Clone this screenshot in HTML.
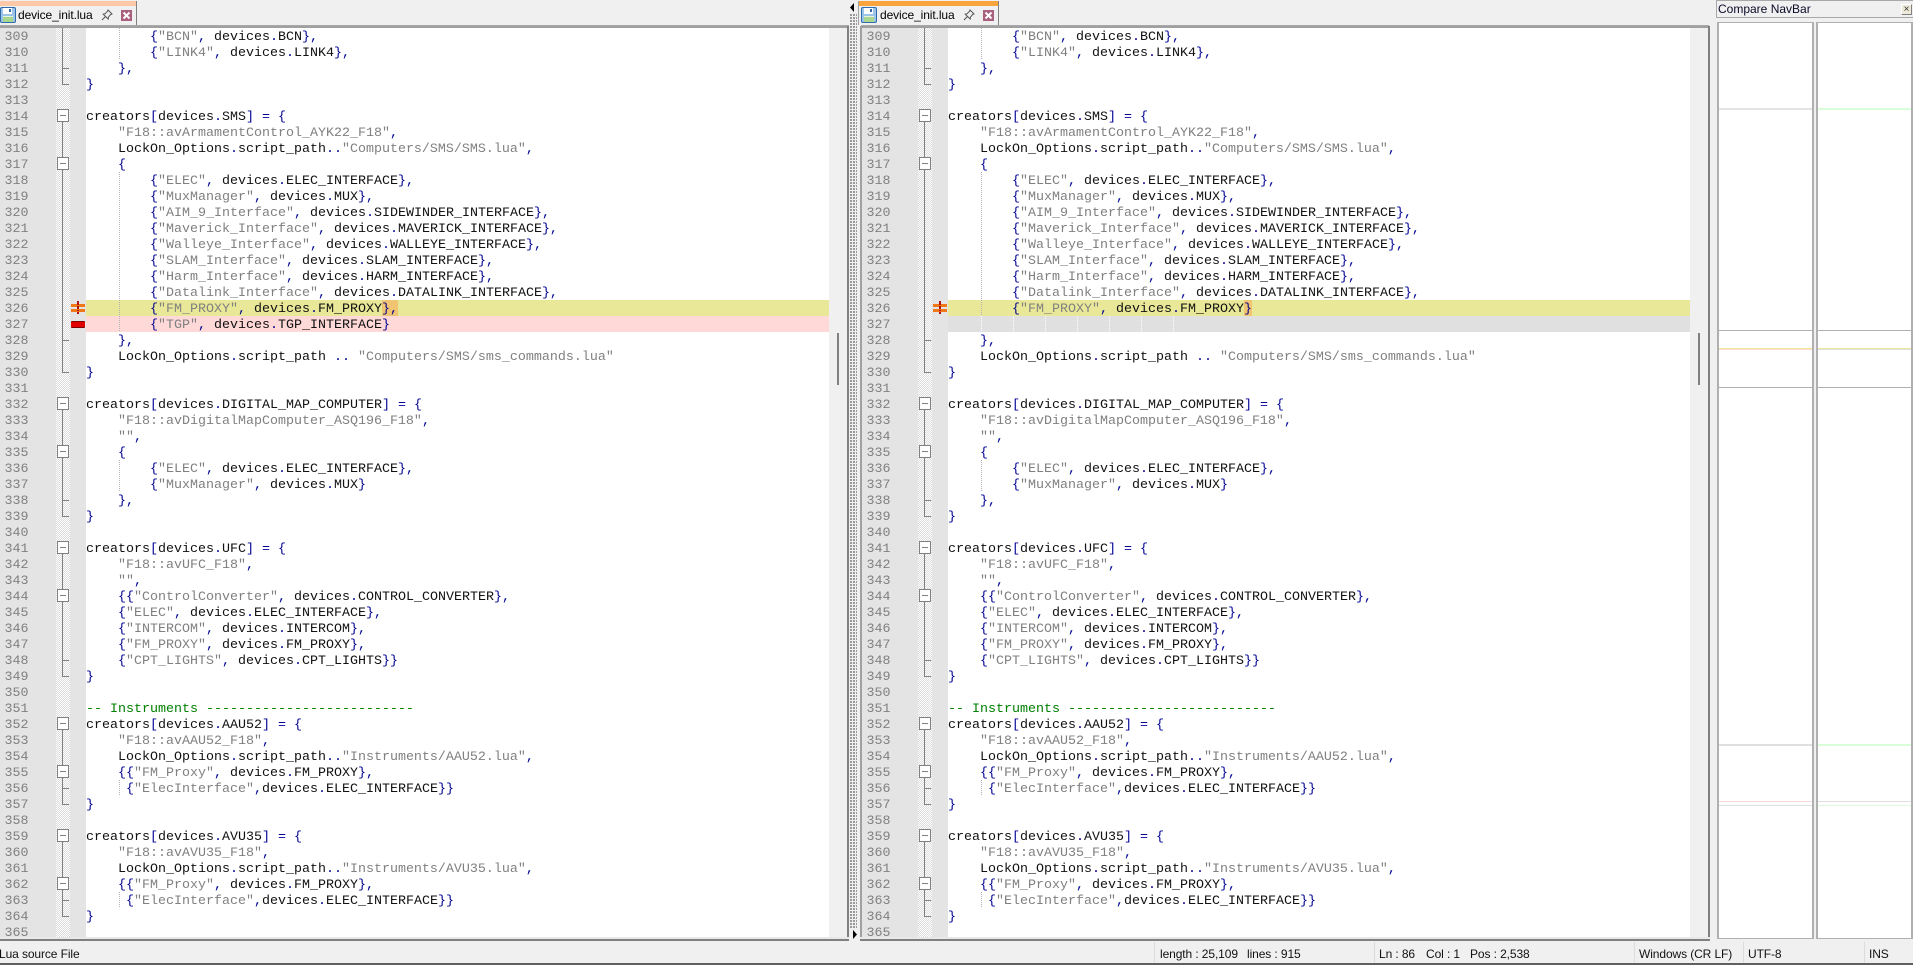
<!DOCTYPE html>
<html lang="en"><head><meta charset="utf-8"><title>device_init.lua</title>
<style>
html,body{margin:0;padding:0}
body{width:1913px;height:965px;background:#f0f0f0;position:relative;overflow:hidden;font-family:"Liberation Sans",sans-serif}
.a{position:absolute;display:block}
pre{margin:0;font:13.33px/16px "Liberation Mono",monospace;color:#111;white-space:pre;overflow:hidden}
pre b{color:#000090;font-weight:normal}
pre i{font-style:normal;color:#808080}
pre u{text-decoration:none;color:#008000}
.ln{color:#808080;top:30px;height:907px;width:48px}
.code{top:30px;height:907px;width:743px}
.tabt{font-size:12px;top:6px;line-height:19px;color:#000;letter-spacing:-.1px}
.st{font-size:12px;top:946px;line-height:16px;color:#111;white-space:pre;letter-spacing:-.1px}
.sep{top:942px;width:1px;height:21px;background:#dcdcdc}
.chk{background-color:#f4f4f4;background-image:repeating-conic-gradient(#dcdcdc 0 25%,#fff 0 50%);background-size:2px 2px}
</style></head>
<body>
<svg width="0" height="0" style="position:absolute">
<defs>
<symbol id="fold" viewBox="0 0 16 909" width="16" height="909">
<g fill="none" stroke="#808080" stroke-width="1" shape-rendering="crispEdges">
<path d="M6.5 0V56.5H13M6.5 40.5H13"/>
<path d="M6.5 81V344.5H13M6.5 312.5H13"/>
<path d="M6.5 369V488.5H13M6.5 472.5H13"/>
<path d="M6.5 513V648.5H13M6.5 632.5H13"/>
<path d="M6.5 689V776.5H13M6.5 760.5H13"/>
<path d="M6.5 801V888.5H13M6.5 872.5H13"/>
<g fill="#fff">
<rect x="1.5" y="81.5" width="11" height="12"/><rect x="1.5" y="129.5" width="11" height="12"/>
<rect x="1.5" y="369.5" width="11" height="12"/><rect x="1.5" y="417.5" width="11" height="12"/>
<rect x="1.5" y="513.5" width="11" height="12"/><rect x="1.5" y="561.5" width="11" height="12"/>
<rect x="1.5" y="689.5" width="11" height="12"/><rect x="1.5" y="737.5" width="11" height="12"/>
<rect x="1.5" y="801.5" width="11" height="12"/><rect x="1.5" y="849.5" width="11" height="12"/>
</g>
<path d="M4 87.5H10M4 135.5H10M4 375.5H10M4 423.5H10M4 519.5H10M4 567.5H10M4 695.5H10M4 743.5H10M4 807.5H10M4 855.5H10"/>
</g>
</symbol>
<symbol id="guides" viewBox="0 0 40 909" width="40" height="909">
<path d="M33.5 0V32M33.5 144V304M33.5 432V464M33.5 752V768M33.5 864V880" fill="none" stroke="#b4b4b4" stroke-width="1" stroke-dasharray="1 1" shape-rendering="crispEdges"/>
</symbol>
<symbol id="floppy" viewBox="0 0 16 16" width="16" height="16">
<rect x=".5" y=".5" width="15" height="15" rx="1.5" fill="#9cc4ea" stroke="#2e6ba8"/>
<rect x="3" y="1" width="9" height="6" fill="#fff"/><rect x="9" y="2" width="2" height="3" fill="#2e6ba8"/>
<rect x="3" y="9" width="10" height="6" fill="#a8d890"/><rect x="3" y="9" width="10" height="1" fill="#e8f4e0"/>
</symbol>
<symbol id="pin" viewBox="0 0 12 12" width="12" height="12">
<path d="M7 1L11 5L9.6 5.6L7.4 8.2L7.2 10L2.2 5.2L4 4.8L6.4 2.4ZM4.6 7.4L1 11" fill="none" stroke="#555" stroke-width="1"/>
</symbol>
<symbol id="close" viewBox="0 0 11 11" width="11" height="11">
<rect width="11" height="11" fill="#a8607e"/><path d="M2.5 2.5L8.5 8.5M8.5 2.5L2.5 8.5" stroke="#fff" stroke-width="2"/>
</symbol>
<symbol id="chg" viewBox="0 0 15 13" width="15" height="13">
<rect x="0" y="3" width="14" height="3" fill="#f07818"/><rect x="0" y="8" width="14" height="3" fill="#f07818"/>
<path d="M7 0V4M7 5V8M7 9V10M7 11V13" stroke="#b01010" stroke-width="2"/>
</symbol>
</defs>
</svg>

<!-- top tab bar -->
<span class="a" style="left:0;top:25px;width:849px;height:1px;background:#a8a8a8"></span>
<span class="a" style="left:861px;top:25px;width:848px;height:1px;background:#a8a8a8"></span>
<span class="a" style="left:0;top:1px;width:137px;height:5px;background:#fcc8a8"></span>
<span class="a" style="left:136px;top:1px;width:1px;height:24px;background:#808080"></span>
<svg class="a" style="left:0;top:7px" width="16" height="16"><use href="#floppy"/></svg>
<span class="a tabt" style="left:18px">device_init.lua</span>
<svg class="a" style="left:101px;top:9px" width="12" height="12"><use href="#pin"/></svg>
<svg class="a" style="left:121px;top:10px" width="11" height="11"><use href="#close"/></svg>

<span class="a" style="left:859px;top:1px;width:140px;height:5px;background:#f9a43c"></span>
<span class="a" style="left:858px;top:1px;width:1px;height:24px;background:#a0a0a0"></span>
<span class="a" style="left:998px;top:1px;width:1px;height:24px;background:#808080"></span>
<svg class="a" style="left:861px;top:7px" width="16" height="16"><use href="#floppy"/></svg>
<span class="a tabt" style="left:880px">device_init.lua</span>
<svg class="a" style="left:963px;top:9px" width="12" height="12"><use href="#pin"/></svg>
<svg class="a" style="left:983px;top:10px" width="11" height="11"><use href="#close"/></svg>

<!-- LEFT PANE -->
<span class="a" style="left:0;top:26px;width:848px;height:2px;background:#a0a0a0"></span>
<span class="a" style="left:0;top:28px;width:56px;height:909px;background:#e4e4e4"></span>
<span class="a chk" style="left:56px;top:28px;width:14px;height:909px"></span>
<span class="a" style="left:70px;top:28px;width:16px;height:909px;background:#e4e4e4"></span>
<span class="a" style="left:86px;top:28px;width:743px;height:909px;background:#fff"></span>
<span class="a" style="left:86px;top:300px;width:743px;height:16px;background:#e8e898"></span>
<span class="a" style="left:86px;top:316px;width:743px;height:16px;background:#ffd8d8"></span>
<span class="a" style="left:382px;top:300px;width:16px;height:16px;background:#f0c470"></span>
<svg class="a" style="left:86px;top:28px" width="40" height="909"><use href="#guides"/></svg>
<svg class="a" style="left:56px;top:28px" width="16" height="909"><use href="#fold"/></svg>
<svg class="a" style="left:71px;top:301px" width="15" height="13"><use href="#chg"/></svg>
<span class="a" style="left:71px;top:321px;width:14px;height:7px;background:#e00000;border:0 solid #800000;border-width:1px 0;box-sizing:border-box;border-radius:1px"></span>
<span class="a" style="left:829px;top:28px;width:17px;height:909px;background:#f0f0f0"></span>
<span class="a" style="left:837px;top:333px;width:2px;height:52px;background:#808080"></span>
<span class="a" style="left:847px;top:26px;width:2px;height:914px;background:#808080"></span>
<span class="a" style="left:0;top:937px;width:849px;height:3px;background:#e8e8e8"></span>
<span class="a" style="left:0;top:939px;width:849px;height:2px;background:#808080"></span>
<pre class="a ln" style="left:4.5px">309
310
311
312
313
314
315
316
317
318
319
320
321
322
323
324
325
326
327
328
329
330
331
332
333
334
335
336
337
338
339
340
341
342
343
344
345
346
347
348
349
350
351
352
353
354
355
356
357
358
359
360
361
362
363
364
365</pre>
<pre class="a code" style="left:86px">        <b>{</b><i>"BCN"</i><b>,</b> devices<b>.</b>BCN<b>},</b>
        <b>{</b><i>"LINK4"</i><b>,</b> devices<b>.</b>LINK4<b>},</b>
    <b>},</b>
<b>}</b>

creators<b>[</b>devices<b>.</b>SMS<b>]</b> <b>=</b> <b>{</b>
    <i>"F18::avArmamentControl_AYK22_F18"</i><b>,</b>
    LockOn_Options<b>.</b>script_path<b>..</b><i>"Computers/SMS/SMS.lua"</i><b>,</b>
    <b>{</b>
        <b>{</b><i>"ELEC"</i><b>,</b> devices<b>.</b>ELEC_INTERFACE<b>},</b>
        <b>{</b><i>"MuxManager"</i><b>,</b> devices<b>.</b>MUX<b>},</b>
        <b>{</b><i>"AIM_9_Interface"</i><b>,</b> devices<b>.</b>SIDEWINDER_INTERFACE<b>},</b>
        <b>{</b><i>"Maverick_Interface"</i><b>,</b> devices<b>.</b>MAVERICK_INTERFACE<b>},</b>
        <b>{</b><i>"Walleye_Interface"</i><b>,</b> devices<b>.</b>WALLEYE_INTERFACE<b>},</b>
        <b>{</b><i>"SLAM_Interface"</i><b>,</b> devices<b>.</b>SLAM_INTERFACE<b>},</b>
        <b>{</b><i>"Harm_Interface"</i><b>,</b> devices<b>.</b>HARM_INTERFACE<b>},</b>
        <b>{</b><i>"Datalink_Interface"</i><b>,</b> devices<b>.</b>DATALINK_INTERFACE<b>},</b>
        <b>{</b><i>"FM_PROXY"</i><b>,</b> devices<b>.</b>FM_PROXY<b>},</b>
        <b>{</b><i>"TGP"</i><b>,</b> devices<b>.</b>TGP_INTERFACE<b>}</b>
    <b>},</b>
    LockOn_Options<b>.</b>script_path <b>..</b> <i>"Computers/SMS/sms_commands.lua"</i>
<b>}</b>

creators<b>[</b>devices<b>.</b>DIGITAL_MAP_COMPUTER<b>]</b> <b>=</b> <b>{</b>
    <i>"F18::avDigitalMapComputer_ASQ196_F18"</i><b>,</b>
    <i>""</i><b>,</b>
    <b>{</b>
        <b>{</b><i>"ELEC"</i><b>,</b> devices<b>.</b>ELEC_INTERFACE<b>},</b>
        <b>{</b><i>"MuxManager"</i><b>,</b> devices<b>.</b>MUX<b>}</b>
    <b>},</b>
<b>}</b>

creators<b>[</b>devices<b>.</b>UFC<b>]</b> <b>=</b> <b>{</b>
    <i>"F18::avUFC_F18"</i><b>,</b>
    <i>""</i><b>,</b>
    <b>{{</b><i>"ControlConverter"</i><b>,</b> devices<b>.</b>CONTROL_CONVERTER<b>},</b>
    <b>{</b><i>"ELEC"</i><b>,</b> devices<b>.</b>ELEC_INTERFACE<b>},</b>
    <b>{</b><i>"INTERCOM"</i><b>,</b> devices<b>.</b>INTERCOM<b>},</b>
    <b>{</b><i>"FM_PROXY"</i><b>,</b> devices<b>.</b>FM_PROXY<b>},</b>
    <b>{</b><i>"CPT_LIGHTS"</i><b>,</b> devices<b>.</b>CPT_LIGHTS<b>}}</b>
<b>}</b>

<u>-- Instruments --------------------------</u>
creators<b>[</b>devices<b>.</b>AAU52<b>]</b> <b>=</b> <b>{</b>
    <i>"F18::avAAU52_F18"</i><b>,</b>
    LockOn_Options<b>.</b>script_path<b>..</b><i>"Instruments/AAU52.lua"</i><b>,</b>
    <b>{{</b><i>"FM_Proxy"</i><b>,</b> devices<b>.</b>FM_PROXY<b>},</b>
     <b>{</b><i>"ElecInterface"</i><b>,</b>devices<b>.</b>ELEC_INTERFACE<b>}}</b>
<b>}</b>

creators<b>[</b>devices<b>.</b>AVU35<b>]</b> <b>=</b> <b>{</b>
    <i>"F18::avAVU35_F18"</i><b>,</b>
    LockOn_Options<b>.</b>script_path<b>..</b><i>"Instruments/AVU35.lua"</i><b>,</b>
    <b>{{</b><i>"FM_Proxy"</i><b>,</b> devices<b>.</b>FM_PROXY<b>},</b>
     <b>{</b><i>"ElecInterface"</i><b>,</b>devices<b>.</b>ELEC_INTERFACE<b>}}</b>
<b>}</b>
</pre>

<!-- DIVIDER -->
<span class="a" style="left:850px;top:14px;width:7px;height:914px;background-image:linear-gradient(#999 2px,transparent 2px);background-size:3px 3px;"></span>
<span class="a" style="left:852px;top:14px;width:1px;height:914px;background:#f0f0f0"></span>
<span class="a" style="left:855px;top:14px;width:1px;height:914px;background:#f0f0f0"></span>
<svg class="a" style="left:850px;top:3px" width="5" height="9"><path d="M4 0V9L0 4.5Z" fill="#000"/></svg>
<svg class="a" style="left:853px;top:930px" width="5" height="9"><path d="M0 0V9L4 4.5Z" fill="#000"/></svg>

<!-- RIGHT PANE -->
<span class="a" style="left:860px;top:26px;width:849px;height:2px;background:#a0a0a0"></span>
<span class="a" style="left:860px;top:26px;width:2px;height:914px;background:#a0a0a0"></span>
<span class="a" style="left:862px;top:28px;width:56px;height:909px;background:#e4e4e4"></span>
<span class="a chk" style="left:918px;top:28px;width:14px;height:909px"></span>
<span class="a" style="left:932px;top:28px;width:16px;height:909px;background:#e4e4e4"></span>
<span class="a" style="left:948px;top:28px;width:742px;height:909px;background:#fff"></span>
<span class="a" style="left:948px;top:300px;width:742px;height:16px;background:#e8e898"></span>
<span class="a" style="left:948px;top:316px;width:742px;height:16px;background:#e0e0e0"></span>
<span class="a" style="left:1244px;top:300px;width:8px;height:16px;background:#f0c470"></span>
<svg class="a" style="left:948px;top:28px" width="40" height="909"><use href="#guides"/></svg>
<svg class="a" style="left:948px;top:316px" width="340" height="16"><path d="M33.5 0V16M65.5 0V16M97.5 0V16M129.5 0V16M161.5 0V16M193.5 0V16M225.5 0V16" fill="none" stroke="#fff" stroke-dasharray="1 1" shape-rendering="crispEdges"/></svg>
<svg class="a" style="left:918px;top:28px" width="16" height="909"><use href="#fold"/></svg>
<svg class="a" style="left:933px;top:301px" width="15" height="13"><use href="#chg"/></svg>
<span class="a" style="left:1690px;top:28px;width:17px;height:909px;background:#f0f0f0"></span>
<span class="a" style="left:1698px;top:333px;width:2px;height:52px;background:#808080"></span>
<span class="a" style="left:1708px;top:26px;width:2px;height:914px;background:#808080"></span>
<span class="a" style="left:860px;top:937px;width:850px;height:3px;background:#e8e8e8"></span>
<span class="a" style="left:860px;top:939px;width:850px;height:2px;background:#808080"></span>
<pre class="a ln" style="left:866.5px">309
310
311
312
313
314
315
316
317
318
319
320
321
322
323
324
325
326
327
328
329
330
331
332
333
334
335
336
337
338
339
340
341
342
343
344
345
346
347
348
349
350
351
352
353
354
355
356
357
358
359
360
361
362
363
364
365</pre>
<pre class="a code" style="left:948px;width:742px">        <b>{</b><i>"BCN"</i><b>,</b> devices<b>.</b>BCN<b>},</b>
        <b>{</b><i>"LINK4"</i><b>,</b> devices<b>.</b>LINK4<b>},</b>
    <b>},</b>
<b>}</b>

creators<b>[</b>devices<b>.</b>SMS<b>]</b> <b>=</b> <b>{</b>
    <i>"F18::avArmamentControl_AYK22_F18"</i><b>,</b>
    LockOn_Options<b>.</b>script_path<b>..</b><i>"Computers/SMS/SMS.lua"</i><b>,</b>
    <b>{</b>
        <b>{</b><i>"ELEC"</i><b>,</b> devices<b>.</b>ELEC_INTERFACE<b>},</b>
        <b>{</b><i>"MuxManager"</i><b>,</b> devices<b>.</b>MUX<b>},</b>
        <b>{</b><i>"AIM_9_Interface"</i><b>,</b> devices<b>.</b>SIDEWINDER_INTERFACE<b>},</b>
        <b>{</b><i>"Maverick_Interface"</i><b>,</b> devices<b>.</b>MAVERICK_INTERFACE<b>},</b>
        <b>{</b><i>"Walleye_Interface"</i><b>,</b> devices<b>.</b>WALLEYE_INTERFACE<b>},</b>
        <b>{</b><i>"SLAM_Interface"</i><b>,</b> devices<b>.</b>SLAM_INTERFACE<b>},</b>
        <b>{</b><i>"Harm_Interface"</i><b>,</b> devices<b>.</b>HARM_INTERFACE<b>},</b>
        <b>{</b><i>"Datalink_Interface"</i><b>,</b> devices<b>.</b>DATALINK_INTERFACE<b>},</b>
        <b>{</b><i>"FM_PROXY"</i><b>,</b> devices<b>.</b>FM_PROXY<b>}</b>

    <b>},</b>
    LockOn_Options<b>.</b>script_path <b>..</b> <i>"Computers/SMS/sms_commands.lua"</i>
<b>}</b>

creators<b>[</b>devices<b>.</b>DIGITAL_MAP_COMPUTER<b>]</b> <b>=</b> <b>{</b>
    <i>"F18::avDigitalMapComputer_ASQ196_F18"</i><b>,</b>
    <i>""</i><b>,</b>
    <b>{</b>
        <b>{</b><i>"ELEC"</i><b>,</b> devices<b>.</b>ELEC_INTERFACE<b>},</b>
        <b>{</b><i>"MuxManager"</i><b>,</b> devices<b>.</b>MUX<b>}</b>
    <b>},</b>
<b>}</b>

creators<b>[</b>devices<b>.</b>UFC<b>]</b> <b>=</b> <b>{</b>
    <i>"F18::avUFC_F18"</i><b>,</b>
    <i>""</i><b>,</b>
    <b>{{</b><i>"ControlConverter"</i><b>,</b> devices<b>.</b>CONTROL_CONVERTER<b>},</b>
    <b>{</b><i>"ELEC"</i><b>,</b> devices<b>.</b>ELEC_INTERFACE<b>},</b>
    <b>{</b><i>"INTERCOM"</i><b>,</b> devices<b>.</b>INTERCOM<b>},</b>
    <b>{</b><i>"FM_PROXY"</i><b>,</b> devices<b>.</b>FM_PROXY<b>},</b>
    <b>{</b><i>"CPT_LIGHTS"</i><b>,</b> devices<b>.</b>CPT_LIGHTS<b>}}</b>
<b>}</b>

<u>-- Instruments --------------------------</u>
creators<b>[</b>devices<b>.</b>AAU52<b>]</b> <b>=</b> <b>{</b>
    <i>"F18::avAAU52_F18"</i><b>,</b>
    LockOn_Options<b>.</b>script_path<b>..</b><i>"Instruments/AAU52.lua"</i><b>,</b>
    <b>{{</b><i>"FM_Proxy"</i><b>,</b> devices<b>.</b>FM_PROXY<b>},</b>
     <b>{</b><i>"ElecInterface"</i><b>,</b>devices<b>.</b>ELEC_INTERFACE<b>}}</b>
<b>}</b>

creators<b>[</b>devices<b>.</b>AVU35<b>]</b> <b>=</b> <b>{</b>
    <i>"F18::avAVU35_F18"</i><b>,</b>
    LockOn_Options<b>.</b>script_path<b>..</b><i>"Instruments/AVU35.lua"</i><b>,</b>
    <b>{{</b><i>"FM_Proxy"</i><b>,</b> devices<b>.</b>FM_PROXY<b>},</b>
     <b>{</b><i>"ElecInterface"</i><b>,</b>devices<b>.</b>ELEC_INTERFACE<b>}}</b>
<b>}</b>
</pre>

<!-- NAVBAR -->
<span class="a" style="left:1716px;top:0;width:197px;height:18px;box-sizing:border-box;border:1px solid #a8a8a8;border-right:0;background:#f0f0f0"></span>
<span class="a" style="left:1718px;top:1px;font-size:12px;line-height:16px;color:#0a0a28">Compare NavBar</span>
<span class="a" style="left:1901px;top:4px;width:11px;height:11px;box-sizing:border-box;background:#ece9d8;border:1px solid;border-color:#fff #808080 #808080 #fff;font-size:10px;line-height:9px;text-align:center;color:#333">×</span>
<span class="a" style="left:1717px;top:22px;width:97px;height:917px;box-sizing:border-box;border:solid #b0b0b0;border-width:1px 2px 1px 2px;background:#fff"></span>
<span class="a" style="left:1816px;top:22px;width:97px;height:917px;box-sizing:border-box;border:solid #b0b0b0;border-width:1px 2px 1px 2px;background:#fff"></span>
<span class="a" style="left:1719px;top:108px;width:93px;height:2px;background:#e4e4e4"></span>
<span class="a" style="left:1818px;top:108px;width:93px;height:2px;background:#d8ffd8"></span>
<span class="a" style="left:1719px;top:330px;width:93px;height:1px;background:#b0b0b0"></span>
<span class="a" style="left:1818px;top:330px;width:93px;height:1px;background:#b0b0b0"></span>
<span class="a" style="left:1719px;top:348px;width:93px;height:1px;background:#e8e898"></span>
<span class="a" style="left:1719px;top:349px;width:93px;height:1px;background:#ffd8d8"></span>
<span class="a" style="left:1818px;top:348px;width:93px;height:1px;background:#e8e898"></span>
<span class="a" style="left:1818px;top:349px;width:93px;height:1px;background:#e0e0e0"></span>
<span class="a" style="left:1719px;top:387px;width:93px;height:1px;background:#b0b0b0"></span>
<span class="a" style="left:1818px;top:387px;width:93px;height:1px;background:#b0b0b0"></span>
<span class="a" style="left:1719px;top:744px;width:93px;height:2px;background:#e0e0e0"></span>
<span class="a" style="left:1818px;top:744px;width:93px;height:2px;background:#d8ffd8"></span>
<span class="a" style="left:1719px;top:801px;width:93px;height:1px;background:#f8d8d8"></span>
<span class="a" style="left:1818px;top:801px;width:93px;height:1px;background:#e0e0e0"></span>
<span class="a" style="left:1719px;top:805px;width:93px;height:1px;background:#e0e0e0"></span>
<span class="a" style="left:1818px;top:805px;width:93px;height:1px;background:#e0f8e0"></span>

<!-- STATUS BAR -->
<span class="a" style="left:0;top:941px;width:1913px;height:23px;background:#f0f0f0"></span>
<span class="a" style="left:0;top:963px;width:1913px;height:2px;background:#606060"></span>
<span class="a st" style="left:-1px">Lua source File</span>
<span class="a sep" style="left:1154px"></span>
<span class="a st" style="left:1160px">length : 25,109</span>
<span class="a st" style="left:1247px">lines : 915</span>
<span class="a sep" style="left:1374px"></span>
<span class="a st" style="left:1379px">Ln : 86</span>
<span class="a st" style="left:1426px">Col : 1</span>
<span class="a st" style="left:1470px">Pos : 2,538</span>
<span class="a sep" style="left:1634px"></span>
<span class="a st" style="left:1639px">Windows (CR LF)</span>
<span class="a sep" style="left:1743px"></span>
<span class="a st" style="left:1748px">UTF-8</span>
<span class="a sep" style="left:1864px"></span>
<span class="a st" style="left:1869px">INS</span>
</body></html>
